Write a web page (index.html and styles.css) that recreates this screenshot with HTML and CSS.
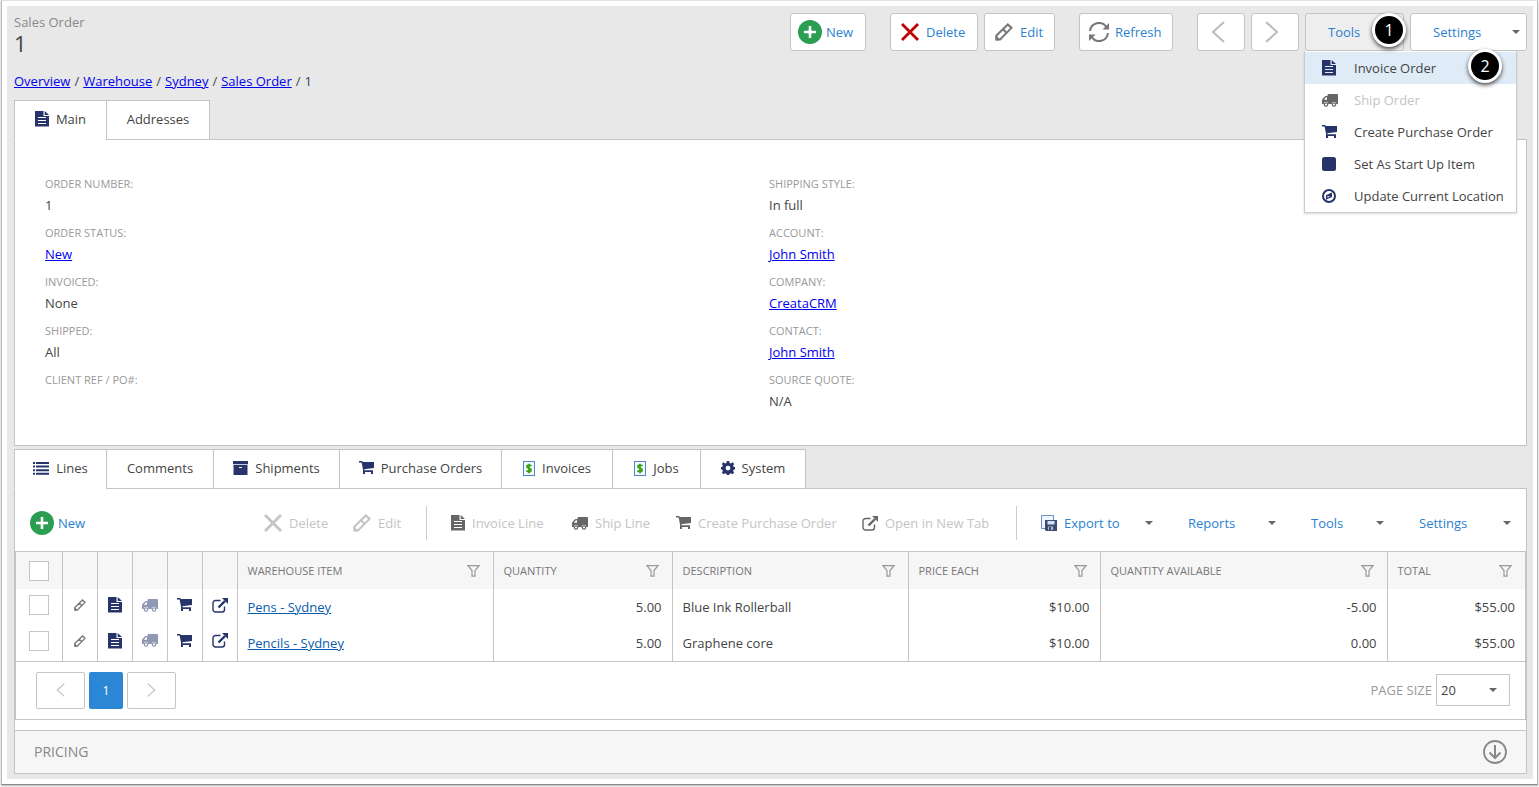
FILE: index.html
```
<!DOCTYPE html>
<html lang="en">
<head>
    <meta charset="UTF-8">
    <meta name="viewport" content="width=device-width, initial-scale=1.0">
    <title>Sales Order 1</title>
    <link rel="stylesheet" href="styles.css">
</head>
<body>
    <svg class="sprite" aria-hidden="true">
        <symbol id="plus" viewBox="0 0 24 24"><circle cx="12" cy="12" r="12" fill="#2b9e52"/><path d="M12 6v12M6 12h12" stroke="#fff" stroke-width="2.6"/></symbol>
        <symbol id="cross" viewBox="0 0 18 18"><path d="M1 1l16 16M17 1L1 17" fill="none" stroke="currentColor" stroke-width="2.8"/></symbol>
        <symbol id="pencil" viewBox="0 0 18 18"><path d="M1.500 16.500v-4L12.800 1.500l3.700 3.400L5.300 16.300zM8 6.300l3.700 3.700" fill="none" stroke="currentColor" stroke-width="2"/><path d="M.5 17.500v-5.500l5.500 5.300z" fill="currentColor"/></symbol>
        <symbol id="refresh" viewBox="0 0 20 20"><path d="M1 9a9 9 0 0 1 16.3-4.2M19 11a9 9 0 0 1-16.3 4.2" fill="none" stroke="currentColor" stroke-width="2"/><path d="M20 1v6.500h-6.500zM0 19v-6.500h6.500z" fill="currentColor"/></symbol>
        <symbol id="left" viewBox="0 0 14 22"><path d="M13 1L2 11l11 10" fill="none" stroke="currentColor" stroke-width="2"/></symbol>
        <symbol id="right" viewBox="0 0 14 22"><path d="M1 1l11 10L1 21" fill="none" stroke="currentColor" stroke-width="2"/></symbol>
        <symbol id="file" viewBox="0 0 14 16"><path fill="currentColor" fill-rule="evenodd" d="M0 0h8.500v5H14v10.500H0zM3 6v1h8V6zM3 9v1h8V9zM3 12v1h8v-1zM9.700 0L14 4H9.700z"/></symbol>
        <symbol id="truck" viewBox="0 0 16 13"><path fill="currentColor" fill-rule="evenodd" d="M6.500 0H15q1 0 1 1v8.500q0 .5-.6.500h-1.100a2.300 2.300 0 0 0-4.600 0H6.300a2.300 2.300 0 0 0-4.600 0H.6Q0 10 0 9.500V6q0-.6.500-1L3 2.300Q3.400 2 4 2h1.500V1q0-1 1-1zM5 3.300H4L1.800 5.700H5z"/><circle cx="4" cy="10.500" r="1.700" fill="none" stroke="currentColor" stroke-width="1.200"/><circle cx="12" cy="10.500" r="1.700" fill="none" stroke="currentColor" stroke-width="1.200"/></symbol>
        <symbol id="cart" viewBox="0 0 15 14"><path fill="currentColor" d="M0 0h3.500v1H15v6L5.300 8.300l.2 1H14V13h-2v-2H6v2H4V8.500L2.600 1.500H0z"/></symbol>
        <symbol id="square" viewBox="0 0 14 14"><rect width="14" height="14" rx="2.500" fill="currentColor"/></symbol>
        <symbol id="compass" viewBox="0 0 14 14"><circle cx="7" cy="7" r="6" fill="none" stroke="currentColor" stroke-width="2"/><path fill="currentColor" fill-rule="evenodd" d="M10 3.500v4.600L4 10.800V6.200zM5.500 7v1.800L8 7.500z"/></symbol>
        <symbol id="list" viewBox="0 0 16 13"><path fill="currentColor" d="M0 0h2v2H0zM3 0h13v2H3zM0 3.600h2v2H0zM3 3.600h13v2H3zM0 7.200h2v2H0zM3 7.200h13v2H3zM0 10.800h2v2H0zM3 10.800h13v2H3z"/></symbol>
        <symbol id="archive" viewBox="0 0 15 14"><path fill="currentColor" fill-rule="evenodd" d="M0 0h15v3.300H0zM.5 4h14v10H.5zM6 6v1h3V6z"/></symbol>
        <symbol id="gear" viewBox="0 0 14 14"><path fill="currentColor" fill-rule="evenodd" d="M5.800 0h2.400l.4 1.900 1.300.5 1.600-1.100 1.700 1.700-1.100 1.600.5 1.200 1.400.2v2.400l-1.400.4-.5 1.300 1 1.500-1.600 1.700-1.600-1-1.300.5-.4 1.200H5.800l-.4-1.200-1.300-.5-1.600 1-1.700-1.700 1.100-1.500-.5-1.300L0 8.400V6l1.400-.2.5-1.200L.8 3l1.700-1.700 1.600 1.100 1.300-.5zM7 4.700a2.400 2.400 0 1 0 0 4.800 2.400 2.400 0 0 0 0-4.800z"/></symbol>
        <symbol id="dollar" viewBox="0 0 12 15"><rect x=".5" y=".5" width="11" height="14" fill="#f4f9ff" stroke="#4d87c7"/><path d="M8.600 4.900Q6 3.300 4.300 4.500q-1.200 1.500.8 2.400l2 .9q1.800 1 .4 2.500-1.700 1-4.200-.5M6 2.800v9.400" fill="none" stroke="#37a10c" stroke-width="1.700"/></symbol>
        <symbol id="open" viewBox="0 0 16 15"><path d="M8.500 2.500h-5A2.500 2.500 0 0 0 1 5v6.500A2.500 2.500 0 0 0 3.500 14H10a2.500 2.500 0 0 0 2.500-2.500V8.500" fill="none" stroke="currentColor" stroke-width="1.400"/><path d="M6.500 9.500L13 3" stroke="currentColor" stroke-width="2.400"/><path d="M10 0h6v6z" fill="currentColor"/></symbol>
        <symbol id="export" viewBox="0 0 16 17"><path d="M5 13.500H.5V.5h12v5" fill="#f0f5ff" stroke="#6f8fcb"/><path d="M4 5h12v11H5l-1-1z" fill="#3c4d70"/><path d="M6.500 6h7v3.500h-7z" fill="#d5e0f2"/><path d="M7 11.500h5V15H7z" fill="#a9bad6"/><path d="M8 12h2v3H8z" fill="#3c4d70"/></symbol>
        <symbol id="filter" viewBox="0 0 13 12"><path d="M1 .7h11L8 5.500v5.700H5V5.500z" fill="none" stroke="currentColor" stroke-width="1.200"/></symbol>
        <symbol id="down" viewBox="0 0 24 24"><circle cx="12" cy="12" r="11" fill="none" stroke="currentColor" stroke-width="1.800"/><path d="M12 5v13M6.500 12.500L12 18l5.500-5.500" fill="none" stroke="currentColor" stroke-width="2"/></symbol>
    </svg>

    <div class="frame">
        <main class="page">
            <header class="header">
                <div class="title">
                    <p>Sales Order</p>
                    <h1>1</h1>
                </div>
                <div class="actions">
                    <button class="btn btn-new"><svg class="i24"><use href="#plus"/></svg>New</button>
                    <button class="btn btn-delete split"><svg class="i18 red"><use href="#cross"/></svg>Delete</button>
                    <button class="btn btn-edit"><svg class="i18 gray"><use href="#pencil"/></svg>Edit</button>
                    <button class="btn btn-refresh split"><svg class="i20 gray"><use href="#refresh"/></svg>Refresh</button>
                    <button class="btn btn-arrow split" aria-label="Previous"><svg><use href="#left"/></svg></button>
                    <button class="btn btn-arrow" aria-label="Next"><svg><use href="#right"/></svg></button>
                    <div class="dropdown">
                        <button class="btn btn-tools" aria-expanded="true">Tools</button>
                        <span class="step step-one">1</span>
                        <div class="menu">
                            <button class="selected"><svg class="file"><use href="#file"/></svg>Invoice Order</button>
                            <button disabled><svg class="truck"><use href="#truck"/></svg>Ship Order</button>
                            <button><svg class="cart"><use href="#cart"/></svg>Create Purchase Order</button>
                            <button><svg class="i14"><use href="#square"/></svg>Set As Start Up Item</button>
                            <button><svg class="i14"><use href="#compass"/></svg>Update Current Location</button>
                            <span class="step step-two">2</span>
                        </div>
                    </div>
                    <button class="btn btn-settings">Settings<i class="caret"></i></button>
                </div>
            </header>

            <nav class="breadcrumb">
                <a href="#">Overview</a><span>/</span><a href="#">Warehouse</a><span>/</span><a href="#">Sydney</a><span>/</span><a href="#">Sales Order</a><span>/</span><span class="current">1</span>
            </nav>

            <div class="tabs">
                <button class="tab tab-main active"><svg class="file"><use href="#file"/></svg>Main</button>
                <button class="tab tab-addresses">Addresses</button>
            </div>
            <section class="panel details">
                <dl>
                    <div><dt>ORDER NUMBER:</dt><dd>1</dd></div>
                    <div><dt>ORDER STATUS:</dt><dd><a href="#">New</a></dd></div>
                    <div><dt>INVOICED:</dt><dd>None</dd></div>
                    <div><dt>SHIPPED:</dt><dd>All</dd></div>
                    <div><dt>CLIENT REF / PO#:</dt><dd></dd></div>
                </dl>
                <dl>
                    <div><dt>SHIPPING STYLE:</dt><dd>In full</dd></div>
                    <div><dt>ACCOUNT:</dt><dd><a href="#">John Smith</a></dd></div>
                    <div><dt>COMPANY:</dt><dd><a href="#">CreataCRM</a></dd></div>
                    <div><dt>CONTACT:</dt><dd><a href="#">John Smith</a></dd></div>
                    <div><dt>SOURCE QUOTE:</dt><dd>N/A</dd></div>
                </dl>
            </section>

            <div class="tabs lower">
                <button class="tab tab-main active"><svg class="list"><use href="#list"/></svg>Lines</button>
                <button class="tab tab-comments">Comments</button>
                <button class="tab tab-shipments"><svg class="cart"><use href="#archive"/></svg>Shipments</button>
                <button class="tab tab-purchase"><svg class="cart"><use href="#cart"/></svg>Purchase Orders</button>
                <button class="tab tab-invoices"><svg class="dollar"><use href="#dollar"/></svg>Invoices</button>
                <button class="tab tab-jobs"><svg class="dollar"><use href="#dollar"/></svg>Jobs</button>
                <button class="tab tab-system"><svg class="i14"><use href="#gear"/></svg>System</button>
            </div>
            <section class="panel">
                <div class="toolbar">
                    <button class="tool tool-new"><svg class="i24"><use href="#plus"/></svg>New</button>
                    <div class="tool-group push">
                        <button class="tool tool-delete" disabled><svg class="i18 faded"><use href="#cross"/></svg>Delete</button>
                        <button class="tool tool-edit" disabled><svg class="i18 faded"><use href="#pencil"/></svg>Edit</button>
                    </div>
                    <div class="tool-group divided">
                        <button class="tool tool-invoice" disabled><svg class="file"><use href="#file"/></svg>Invoice Line</button>
                        <button class="tool tool-ship" disabled><svg class="truck"><use href="#truck"/></svg>Ship Line</button>
                        <button class="tool tool-purchase" disabled><svg class="cart"><use href="#cart"/></svg>Create Purchase Order</button>
                        <button class="tool tool-open" disabled><svg class="open"><use href="#open"/></svg>Open in New Tab</button>
                    </div>
                    <div class="tool-group divided">
                        <button class="tool tool-export"><svg class="export"><use href="#export"/></svg>Export to<i class="caret"></i></button>
                        <button class="tool tool-reports">Reports<i class="caret"></i></button>
                        <button class="tool tool-tools">Tools<i class="caret"></i></button>
                        <button class="tool tool-settings">Settings<i class="caret"></i></button>
                    </div>
                </div>

                <div class="grid">
                    <table>
                        <colgroup>
                            <col class="c-check"><col class="c-icon"><col class="c-icon"><col class="c-icon"><col class="c-icon"><col class="c-icon">
                            <col><col class="c-qty"><col class="c-desc"><col class="c-price"><col class="c-avail"><col class="c-total">
                        </colgroup>
                        <thead>
                            <tr>
                                <th class="icon"><input type="checkbox" aria-label="Select all"></th>
                                <th></th><th></th><th></th><th></th><th></th>
                                <th><div class="head">WAREHOUSE ITEM<svg><use href="#filter"/></svg></div></th>
                                <th><div class="head">QUANTITY<svg><use href="#filter"/></svg></div></th>
                                <th><div class="head">DESCRIPTION<svg><use href="#filter"/></svg></div></th>
                                <th><div class="head">PRICE EACH<svg><use href="#filter"/></svg></div></th>
                                <th><div class="head">QUANTITY AVAILABLE<svg><use href="#filter"/></svg></div></th>
                                <th><div class="head">TOTAL<svg><use href="#filter"/></svg></div></th>
                            </tr>
                        </thead>
                        <tbody>
                            <tr>
                                <td class="icon"><input type="checkbox" aria-label="Select Pens"></td>
                                <td class="icon"><svg class="i12 gray"><use href="#pencil"/></svg></td>
                                <td class="icon"><svg class="file"><use href="#file"/></svg></td>
                                <td class="icon"><svg class="truck pale"><use href="#truck"/></svg></td>
                                <td class="icon"><svg class="cart"><use href="#cart"/></svg></td>
                                <td class="icon"><svg class="open"><use href="#open"/></svg></td>
                                <td><a href="#">Pens - Sydney</a></td>
                                <td class="num">5.00</td>
                                <td>Blue Ink Rollerball</td>
                                <td class="num">$10.00</td>
                                <td class="num">-5.00</td>
                                <td class="num">$55.00</td>
                            </tr>
                            <tr>
                                <td class="icon"><input type="checkbox" aria-label="Select Pencils"></td>
                                <td class="icon"><svg class="i12 gray"><use href="#pencil"/></svg></td>
                                <td class="icon"><svg class="file"><use href="#file"/></svg></td>
                                <td class="icon"><svg class="truck pale"><use href="#truck"/></svg></td>
                                <td class="icon"><svg class="cart"><use href="#cart"/></svg></td>
                                <td class="icon"><svg class="open"><use href="#open"/></svg></td>
                                <td><a href="#">Pencils - Sydney</a></td>
                                <td class="num">5.00</td>
                                <td>Graphene core</td>
                                <td class="num">$10.00</td>
                                <td class="num">0.00</td>
                                <td class="num">$55.00</td>
                            </tr>
                        </tbody>
                    </table>
                    <div class="pager">
                        <button class="page-arrow" aria-label="Previous page"><svg><use href="#left"/></svg></button>
                        <button class="page-number">1</button>
                        <button class="page-arrow" aria-label="Next page"><svg><use href="#right"/></svg></button>
                        <label for="size">PAGE SIZE</label>
                        <div class="select">
                            <select id="size"><option>20</option><option>50</option></select>
                            <i class="caret"></i>
                        </div>
                    </div>
                </div>

                <div class="pricing">
                    <h2>PRICING</h2>
                    <button aria-label="Expand pricing"><svg class="i24"><use href="#down"/></svg></button>
                </div>
            </section>
        </main>
    </div>
</body>
</html>
```
FILE: styles.css
```
* {
    box-sizing: border-box;
}

body {
    margin: 0;
    background: #fff;
    color: #444;
    font-family: "Segoe UI", "Open Sans", sans-serif;
    font-size: 13px;
    line-height: 20px;
}

button {
    padding: 0;
    border: none;
    background: none;
    color: inherit;
    font: inherit;
    cursor: pointer;
}

p, h1, h2, dl, dd {
    margin: 0;
    font-weight: normal;
}

a {
    color: #0000ee;
}

svg {
    display: block;
    flex: none;
}

.sprite {
    position: absolute;
    width: 0;
    height: 0;
}

/* icon sizes */
.i12 { width: 12px; height: 12px; }
.i14 { width: 14px; height: 14px; }
.i18 { width: 18px; height: 18px; }
.i20 { width: 20px; height: 20px; }
.i24 { width: 24px; height: 24px; }
.file { width: 14px; height: 16px; }
.truck { width: 16px; height: 13px; }
.cart { width: 15px; height: 14px; }
.list { width: 16px; height: 13px; }
.dollar { width: 12px; height: 15px; }
.open { width: 16px; height: 15px; }
.export { width: 16px; height: 17px; }

.red { color: #c00000; }
.gray { color: #777; }
.pale { opacity: 0.5; }

.caret {
    border: 4px solid transparent;
    border-top-color: #666;
    border-bottom: none;
}

.frame {
    margin: 0 1px 2px;
    padding: 5px 4px 5px 5px;
    border: 1px solid #bbb;
    border-top-color: #e2e2e2;
    border-bottom-color: #888;
    box-shadow: 0 1px 2px rgba(0, 0, 0, 0.3);
}

.page {
    padding: 7px 6px 5px 7px;
    background: #e8e8e8;
}

/* header */
.header {
    display: flex;
    justify-content: space-between;
    height: 58px;
}

.title p {
    color: #888;
    line-height: 18px;
}

.title h1 {
    font-size: 22px;
    line-height: 25px;
}

.actions {
    display: flex;
    gap: 6px;
}

.btn {
    display: flex;
    align-items: center;
    height: 38px;
    border: 1px solid #c4c4c4;
    border-radius: 3px;
    background: #fff;
    color: #2b81d1;
}

.split {
    margin-left: 18px;
}

.btn-new {
    width: 76px;
    padding-left: 7px;
    gap: 4px;
}

.btn-delete {
    width: 88px;
    padding-left: 10px;
    gap: 7px;
}

.btn-edit {
    width: 71px;
    padding-left: 10px;
    gap: 7px;
}

.btn-refresh {
    width: 94px;
    padding-left: 9px;
    gap: 6px;
}

.btn-arrow {
    justify-content: center;
    width: 48px;
    padding-right: 6px;
    color: #bbb;
}

.btn-arrow svg {
    width: 14px;
    height: 22px;
}

.btn-tools {
    width: 99px;
    padding-left: 22px;
    background: #eee;
}

.btn-settings {
    justify-content: space-between;
    width: 117px;
    padding: 0 6px 0 22px;
}

.dropdown {
    position: relative;
}

.menu {
    position: absolute;
    top: 38px;
    left: -1px;
    z-index: 2;
    width: 213px;
    padding-top: 1px;
    border: 1px solid #ccc;
    border-top: none;
    background: #fff;
    box-shadow: 0 1px 2px rgba(0, 0, 0, 0.15);
}

.menu button {
    display: grid;
    grid-template-columns: 32px 1fr;
    align-items: center;
    width: 100%;
    height: 32px;
    padding-left: 17px;
    text-align: left;
    white-space: nowrap;
}

.menu svg {
    color: #263469;
}

.menu .selected {
    background: #dfebf7;
}

.menu button:disabled {
    color: #c4c4c4;
}

.menu button:disabled svg {
    color: #666;
}

.step {
    position: absolute;
    z-index: 3;
    width: 34px;
    height: 34px;
    border: 3px solid #fff;
    border-radius: 50%;
    background: #000;
    box-shadow: 0 2px 4px rgba(0, 0, 0, 0.7);
    color: #fff;
    font-size: 16px;
    line-height: 28px;
    text-align: center;
}

.step-one {
    top: 0;
    left: 67px;
}

.step-two {
    top: -2px;
    right: 14px;
}

.breadcrumb {
    display: flex;
    gap: 4px;
    height: 29px;
}

.breadcrumb .current {
    color: #1d3f66;
}

/* tabs */
.tabs {
    display: flex;
    position: relative;
    margin-bottom: -1px;
}

.lower {
    margin-top: 3px;
}

.tab {
    display: flex;
    align-items: center;
    justify-content: center;
    gap: 7px;
    height: 40px;
    margin-right: -1px;
    padding-bottom: 2px;
    border: 1px solid #c4c4c4;
    background: #fff;
}

.tab svg {
    color: #263469;
}

.active {
    border-bottom-color: #fff;
}

.tab-main { width: 93px; }
.tab-addresses { width: 104px; }
.tab-comments { width: 108px; }
.tab-shipments { width: 127px; }
.tab-purchase { width: 163px; }
.tab-invoices { width: 112px; }
.tab-jobs { width: 89px; }
.tab-system { width: 106px; }

.panel {
    border: 1px solid #c4c4c4;
    background: #fff;
}

.details {
    display: grid;
    grid-template-columns: 1fr 1fr;
    padding: 34px 33px 26px 30px;
}

.details dl div {
    height: 49px;
}

.details dt {
    color: #999;
    font-size: 11px;
}

.details dd {
    line-height: 22px;
}

/* toolbar over the lines */
.toolbar {
    display: flex;
    align-items: center;
    height: 62px;
    padding: 6px 15px 0;
}

.tool-group {
    display: flex;
    align-items: center;
    height: 34px;
}

.push {
    margin-left: auto;
}

.divided {
    padding-left: 24px;
    border-left: 1px solid #ccc;
}

.tool {
    display: flex;
    align-items: center;
    gap: 7px;
    color: #2b81d1;
    white-space: nowrap;
}

.tool:disabled {
    color: #c4c4c4;
}

.tool:disabled svg {
    color: #666;
}

.tool:disabled .faded {
    color: #c4c4c4;
}

.tool .caret {
    margin-left: auto;
}

.tool-new { gap: 4px; }
.tool-delete { width: 89px; }
.tool-edit { width: 73px; }
.tool-invoice { width: 121px; }
.tool-ship { width: 104px; }
.tool-purchase { width: 186px; }
.tool-open { width: 154px; }
.tool-export { width: 112px; }

.tool-reports {
    width: 88px;
    margin-left: 35px;
}

.tool-tools {
    width: 73px;
    margin-left: 35px;
}

.tool-settings {
    width: 92px;
    margin-left: 35px;
}

/* lines table */
.grid {
    border: 1px solid #c4c4c4;
}

table {
    width: 100%;
    table-layout: fixed;
    border-collapse: collapse;
    border-bottom: 1px solid #c4c4c4;
}

.c-check { width: 46px; }
.c-icon { width: 35px; }
.c-qty { width: 179px; }
.c-desc { width: 236px; }
.c-price { width: 192px; }
.c-avail { width: 287px; }
.c-total { width: 138px; }

th, td {
    height: 36px;
    padding: 0 10px;
    border-left: 1px solid #c4c4c4;
    text-align: left;
}

th:first-child, td:first-child {
    border-left: none;
}

th {
    height: 37px;
    background: #f6f6f6;
    color: #777;
    font-size: 11px;
    font-weight: normal;
}

td a {
    color: #0a5cad;
}

.num {
    text-align: right;
}

.icon {
    padding: 0;
    color: #263469;
}

td.icon {
    padding-bottom: 4px;
}

.icon svg, .icon input {
    display: block;
    margin: 0 auto;
}

.head {
    display: flex;
    align-items: center;
    justify-content: space-between;
    padding-right: 3px;
    white-space: nowrap;
}

.head svg {
    width: 13px;
    height: 12px;
    color: #999;
}

input[type="checkbox"] {
    appearance: none;
    width: 20px;
    height: 20px;
    border: 1px solid #c4c4c4;
    background: #fff;
}

.pager {
    display: flex;
    align-items: center;
    gap: 4px;
    height: 57px;
    padding: 0 15px 0 20px;
}

.page-arrow, .page-number {
    height: 37px;
    border-radius: 2px;
}

.page-arrow {
    width: 49px;
    border: 1px solid #c4c4c4;
    color: #c4c4c4;
}

.page-arrow svg {
    width: 9px;
    height: 14px;
    margin: 0 auto;
}

.page-number {
    width: 34px;
    background: #2b86d5;
    color: #fff;
}

.pager label {
    margin-left: auto;
    color: #999;
}

.select {
    position: relative;
}

.select select {
    display: block;
    appearance: none;
    width: 74px;
    height: 32px;
    padding: 0 4px;
    border: 1px solid #c4c4c4;
    border-radius: 0;
    background: #fff;
    color: #444;
    font: inherit;
}

.select .caret {
    position: absolute;
    top: 14px;
    right: 13px;
    pointer-events: none;
}

.pricing {
    display: flex;
    align-items: center;
    justify-content: space-between;
    height: 43px;
    margin-top: 10px;
    padding: 0 19px;
    border-top: 1px solid #c4c4c4;
    background: #f6f6f6;
    color: #888;
}

.pricing h2 {
    font-size: 14px;
}
```
